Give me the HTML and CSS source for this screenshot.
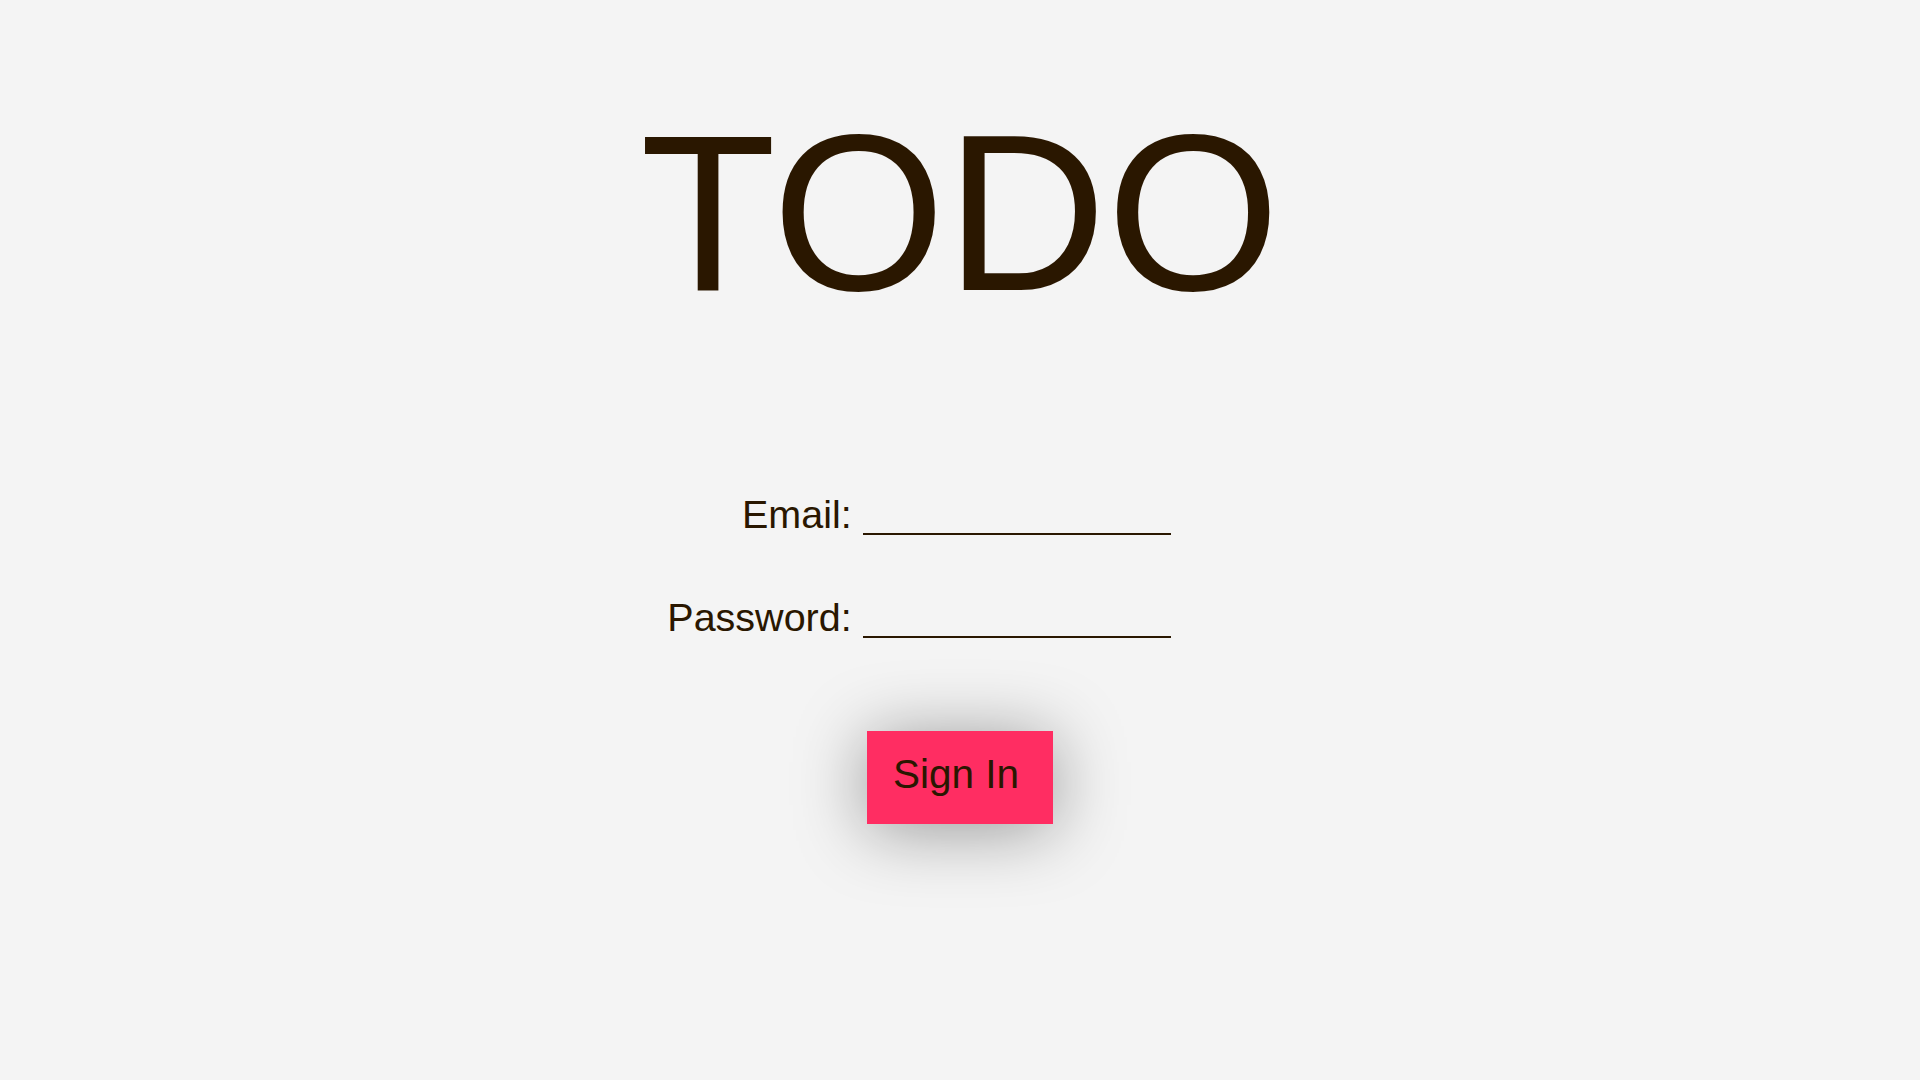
FILE: index.html
```html
<!DOCTYPE html>
<html lang="en">
<head>
<meta charset="utf-8">
<title>TODO</title>
<link rel="stylesheet" href="styles.css">
</head>
<body>
<main class="page">
  <h1 class="title">TODO</h1>
  <form class="login">
    <label class="label" for="email">Email:</label>
    <input class="field" id="email" type="email">
    <label class="label" for="password">Password:</label>
    <input class="field" id="password" type="password">
  </form>
  <button class="signin" type="button">Sign In</button>
</main>
</body>
</html>
```
FILE: styles.css
```css
html, body {
  margin: 0;
  padding: 0;
  background: #f4f4f4;
}
body {
  font-family: "Liberation Sans", Arial, sans-serif;
  color: #2a1700;
}
.page {
  display: flex;
  flex-direction: column;
  align-items: center;
  padding-top: 101px;
  min-height: 1080px;
  box-sizing: border-box;
}
.title {
  margin: 0;
  font-size: 223px;
  line-height: 223px;
  font-weight: 400;
}
.login {
  margin: 170px 82px 0 0;
  display: grid;
  grid-template-columns: auto 308px;
  column-gap: 11px;
  row-gap: 62px;
  align-items: start;
}
.label {
  font-size: 39.5px;
  line-height: 40px;
  text-align: right;
}
.field {
  width: 308px;
  height: 41px;
  box-sizing: border-box;
  padding: 0;
  margin: 0;
  border: none;
  border-bottom: 2px solid #2a1700;
  background: transparent;
  font-family: "Liberation Sans", Arial, sans-serif;
  font-size: 32px;
  color: #2a1700;
  outline: none;
}
.signin {
  margin-top: 93px;
  padding: 23px 34px 30px 26px;
  border: none;
  background: #ff2d62;
  color: #2a1700;
  font-family: "Liberation Sans", Arial, sans-serif;
  font-size: 40.5px;
  line-height: 40px;
  box-shadow: 0 6px 70px rgba(0, 0, 0, 0.38);
  cursor: pointer;
}
```
